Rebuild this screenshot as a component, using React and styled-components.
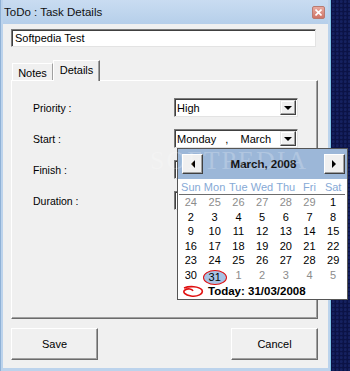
import React from 'react';
import styled, { createGlobalStyle } from 'styled-components';

const Global = createGlobalStyle`
  html, body {
    margin: 0;
    padding: 0;
    background: #0c1448;
    overflow: hidden;
  }
  * { box-sizing: border-box; }
`;

const Desktop = styled.div`
  position: relative;
  width: 350px;
  height: 371px;
  background:
    radial-gradient(circle at 30% 40%, rgba(40, 60, 140, 0.35) 0 1px, transparent 2px) 0 0 / 4px 4px,
    #0b1346;
  font-family: 'Liberation Sans', Arial, sans-serif;
`;

const Window = styled.div`
  width: 331px;
  height: 371px;
  background: #bcd3ec;
  border-left: 1px solid #8fb1d6;
  border-right: 1px solid #7fc4e8;
  display: flex;
  flex-direction: column;
  padding: 0 2px 3px 2px;
`;

const TitleBar = styled.div`
  height: 24px;
  flex: none;
  display: flex;
  align-items: center;
  justify-content: space-between;
  padding: 0 3px 0 1px;
  background: linear-gradient(#c9dcf1, #b6cfea);
  font-size: 11.5px;
  color: #111;
`;

const CloseBtn = styled.div`
  width: 13px;
  height: 13px;
  border: 1px solid #b87a70;
  border-radius: 2px;
  background: linear-gradient(#e8aaa0, #cf7466);
  display: flex;
  align-items: center;
  justify-content: center;
  margin-top: 1px;
`;

const Body = styled.div`
  flex: 1;
  background: #f0f0f0;
  display: flex;
  flex-direction: column;
  padding: 5px 10px 8px 8px;
`;

const TextField = styled.div`
  width: 305px;
  height: 18px;
  background: #fff;
  border-top: 1px solid #7a7a7a;
  border-left: 1px solid #7a7a7a;
  border-right: 1px solid #e3e3e3;
  border-bottom: 1px solid #e3e3e3;
  box-shadow: inset 1px 1px 0 #404040;
  font-size: 11px;
  padding: 2px 3px;
  color: #000;
`;

const Tabs = styled.div`
  margin-top: 13px;
  height: 20px;
  display: flex;
  align-items: flex-end;
  padding-left: 1px;
`;

const Tab = styled.div`
  height: ${p => (p.active ? '21px' : '17px')};
  width: ${p => (p.active ? '47px' : '41px')};
  background: #f0f0f0;
  border-top: 1px solid #fff;
  border-left: 1px solid #fff;
  border-right: 1px solid ${p => (p.active ? '#6b6b6b' : '#a0a0a0')};
  box-shadow: ${p => (p.active ? 'inset -1px 0 0 #a0a0a0' : 'none')};
  font-size: 11px;
  display: flex;
  justify-content: center;
  padding-top: 3px;
  margin-bottom: ${p => (p.active ? '-1px' : '0')};
  position: relative;
  z-index: ${p => (p.active ? 1 : 0)};
`;

const Panel = styled.div`
  width: 307px;
  height: 239px;
  border-top: 1px solid #fff;
  border-left: 1px solid #fff;
  border-right: 1px solid #6b6b6b;
  border-bottom: 1px solid #6b6b6b;
  box-shadow: inset -1px -1px 0 #a0a0a0;
  padding: 17px 0 0 21px;
  display: grid;
  grid-template-columns: 141px 124px;
  grid-auto-rows: 19px;
  row-gap: 12px;
  align-items: center;
`;

const Label = styled.div`
  font-size: 10.5px;
  color: #000;
`;

const Select = styled.div`
  height: 19px;
  background: #fff;
  border-top: 1px solid #7a7a7a;
  border-left: 1px solid #7a7a7a;
  border-right: 1px solid #e3e3e3;
  border-bottom: 1px solid #e3e3e3;
  box-shadow: inset 1px 1px 0 #404040;
  display: flex;
  align-items: center;
  justify-content: space-between;
  font-size: 11px;
  padding: 0 1px 0 2px;
`;

const Arrow = styled.div`
  width: 16px;
  height: 15px;
  background: #f0f0f0;
  border-top: 1px solid #e3e3e3;
  border-left: 1px solid #e3e3e3;
  border-right: 1px solid #404040;
  border-bottom: 1px solid #404040;
  box-shadow: inset -1px -1px 0 #a0a0a0, inset 1px 1px 0 #fff;
  display: flex;
  align-items: center;
  justify-content: center;
  &::after {
    content: '';
    border-left: 4px solid transparent;
    border-right: 4px solid transparent;
    border-top: 4px solid #000;
  }
`;

const Footer = styled.div`
  margin-top: 9px;
  display: flex;
  justify-content: space-between;
  width: 307px;
`;

const Button = styled.div`
  width: 87px;
  height: 32px;
  background: #f0f0f0;
  border-top: 1px solid #fff;
  border-left: 1px solid #fff;
  border-right: 1px solid #6b6b6b;
  border-bottom: 1px solid #6b6b6b;
  box-shadow: inset -1px -1px 0 #a0a0a0;
  display: flex;
  align-items: center;
  justify-content: center;
  font-size: 11px;
  color: #000;
`;

const Calendar = styled.div`
  position: absolute;
  left: 177px;
  top: 148px;
  width: 171px;
  height: 152px;
  background: #fff;
  border: 1px solid #555;
  display: flex;
  flex-direction: column;
  z-index: 5;
`;

const CalHeader = styled.div`
  height: 30px;
  background: #9cb7d8;
  display: flex;
  align-items: center;
  justify-content: space-between;
  padding: 0 2px 0 4px;
  font-size: 11.5px;
  font-weight: bold;
  color: #111;
`;

const NavBtn = styled.div`
  width: 21px;
  height: 20px;
  background: #f0f0f0;
  border-top: 1px solid #fff;
  border-left: 1px solid #fff;
  border-right: 1px solid #404040;
  border-bottom: 1px solid #404040;
  box-shadow: inset -1px -1px 0 #a0a0a0;
  display: flex;
  align-items: center;
  justify-content: center;
  &::after {
    content: '';
    border-top: 4px solid transparent;
    border-bottom: 4px solid transparent;
    ${p => (p.dir === 'left' ? 'border-right: 4px solid #000;' : 'border-left: 4px solid #000;')}
  }
`;

const DayGrid = styled.div`
  display: grid;
  grid-template-columns: repeat(7, 1fr);
  padding: 0 2px 0 1px;
`;

const WeekDay = styled.div`
  height: 16px;
  font-size: 11px;
  color: #86a9d6;
  text-align: center;
  line-height: 16px;
  border-bottom: 1px solid #6d6d6d;
`;

const Day = styled.div`
  height: 14.6px;
  font-size: 11px;
  line-height: 14.6px;
  text-align: center;
  color: ${p => (p.muted ? '#8c8c8c' : '#000')};
  position: relative;
`;

const Selected = styled.span`
  display: inline-block;
  width: 24px;
  height: 15px;
  line-height: 13px;
  border-radius: 50%;
  background: #a7c2e4;
  border: 1.5px solid #e01010;
  margin-top: 2px;
`;

const TodayRow = styled.div`
  display: flex;
  align-items: center;
  gap: 3px;
  padding: 2px 0 0 3px;
  font-size: 11.5px;
  font-weight: bold;
  color: #000;
`;

const Watermark = styled.div`
  position: absolute;
  left: 150px;
  top: 146px;
  font-family: 'Liberation Serif', serif;
  font-size: 26px;
  letter-spacing: 2px;
  color: rgba(255, 255, 255, 0.22);
  pointer-events: none;
  z-index: 6;
`;

const rows = [
  [[24, 1], [25, 1], [26, 1], [27, 1], [28, 1], [29, 1], [1]],
  [[2], [3], [4], [5], [6], [7], [8]],
  [[9], [10], [11], [12], [13], [14], [15]],
  [[16], [17], [18], [19], [20], [21], [22]],
  [[23], [24], [25], [26], [27], [28], [29]],
  [[30], [31, 0, 1], [1, 1], [2, 1], [3, 1], [4, 1], [5, 1]],
];

const App = () => {
  return (
    <Desktop>
      <Global />
      <Window>
        <TitleBar>
          <span>ToDo : Task Details</span>
          <CloseBtn>
            <svg width="7" height="7" viewBox="0 0 7 7">
              <path d="M0.5 0.5 L6.5 6.5 M6.5 0.5 L0.5 6.5" stroke="#fff" strokeWidth="1.6" />
            </svg>
          </CloseBtn>
        </TitleBar>
        <Body>
          <TextField>Softpedia Test</TextField>
          <Tabs>
            <Tab>Notes</Tab>
            <Tab active>Details</Tab>
          </Tabs>
          <Panel>
            <Label>Priority :</Label>
            <Select>
              <span>High</span>
              <Arrow />
            </Select>
            <Label>Start :</Label>
            <Select>
              <span>Monday &nbsp;&nbsp;,&nbsp;&nbsp;&nbsp; March</span>
              <Arrow />
            </Select>
            <Label>Finish :</Label>
            <Select>
              <span />
              <Arrow />
            </Select>
            <Label>Duration :</Label>
            <Select>
              <span />
              <Arrow />
            </Select>
          </Panel>
          <Footer>
            <Button>Save</Button>
            <Button>Cancel</Button>
          </Footer>
        </Body>
      </Window>

      <Calendar>
        <CalHeader>
          <NavBtn dir="left" />
          <span>March, 2008</span>
          <NavBtn dir="right" />
        </CalHeader>
        <DayGrid>
          {['Sun', 'Mon', 'Tue', 'Wed', 'Thu', 'Fri', 'Sat'].map(d => (
            <WeekDay key={d}>{d}</WeekDay>
          ))}
        </DayGrid>
        <DayGrid>
          {rows.map((r, i) =>
            r.map(([n, muted, sel], j) => (
              <Day key={`${i}-${j}`} muted={muted}>
                {sel ? <Selected>{n}</Selected> : n}
              </Day>
            ))
          )}
        </DayGrid>
        <TodayRow>
          <svg width="24" height="13" viewBox="0 0 24 13">
            <path
              d="M3 3 C8 1 18 1 21 5 C23 9 16 12 10 11 C4 10 1 7 4 5 C7 3 11 4 12 6"
              fill="none"
              stroke="#e01010"
              strokeWidth="1.6"
            />
          </svg>
          <span>Today: 31/03/2008</span>
        </TodayRow>
      </Calendar>
      <Watermark>SOFTPEDIA</Watermark>
    </Desktop>
  );
};

export default App;
